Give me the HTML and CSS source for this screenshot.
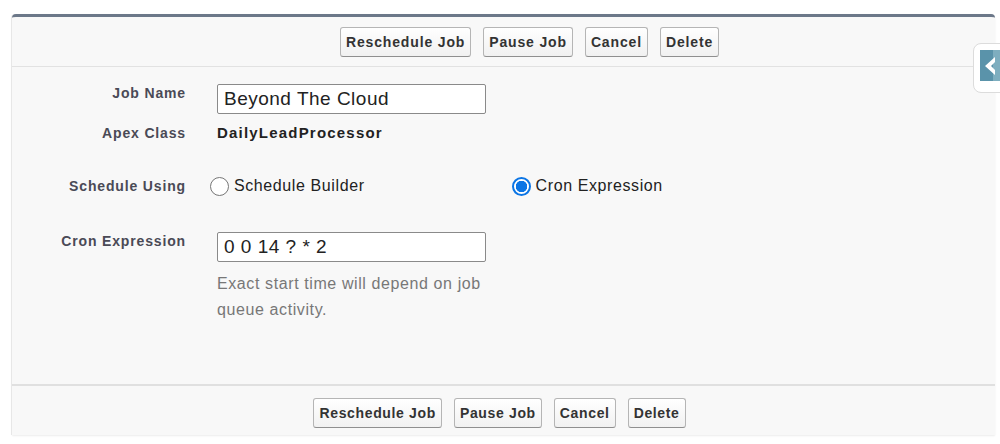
FILE: index.html
```html
<!DOCTYPE html>
<html>
<head>
<meta charset="utf-8">
<link rel="stylesheet" href="styles.css">
</head>
<body>
<div class="page">
  <div class="panel">
    <div class="btnbar top">
      <button class="btn">Reschedule Job</button>
      <button class="btn">Pause Job</button>
      <button class="btn">Cancel</button>
      <button class="btn">Delete</button>
    </div>
    <div class="form">
      <div class="row row-name">
        <div class="label">Job Name</div>
        <div class="value"><div class="input">Beyond The Cloud</div></div>
      </div>
      <div class="row row-class">
        <div class="label">Apex Class</div>
        <div class="value strong">DailyLeadProcessor</div>
      </div>
      <div class="row row-sched">
        <div class="label">Schedule Using</div>
        <div class="value radios">
          <label class="radio-opt"><span class="radio"></span>Schedule Builder</label>
          <label class="radio-opt second"><span class="radio checked"></span>Cron Expression</label>
        </div>
      </div>
      <div class="row row-cron">
        <div class="label">Cron Expression</div>
        <div class="value">
          <div class="input">0 0 14 ? * 2</div>
          <div class="help">Exact start time will depend on job queue activity.</div>
        </div>
      </div>
    </div>
    <div class="btnbar bottom">
      <button class="btn">Reschedule Job</button>
      <button class="btn">Pause Job</button>
      <button class="btn">Cancel</button>
      <button class="btn">Delete</button>
    </div>
  </div>
  <div class="sidetab">
    <div class="sidetab-inner">
      <svg width="14" height="20" viewBox="0 0 14 20"><polygon points="12,1 2,10 12,19 12,14 8,10 12,6" fill="#ffffff"/></svg>
    </div>
  </div>
</div>
</body>
</html>
```
FILE: styles.css
```css
html, body {
  margin: 0;
  padding: 0;
  background: #ffffff;
  overflow: hidden;
  font-family: "Liberation Sans", Arial, sans-serif;
}
.page {
  position: relative;
  width: 1000px;
  height: 444px;
  padding: 14px 5px 0 12px;
  box-sizing: border-box;
}
.panel {
  width: 983px;
  background: #f8f8f8;
  border-top: 3px solid #6c7889;
  border-radius: 4px 4px 0 0;
  box-shadow: 0 1px 2px rgba(0,0,0,0.08), -1px 0 0 #ececec;
}
.btnbar {
  display: flex;
  justify-content: center;
  gap: 12px;
  box-sizing: border-box;
}
.btnbar.top {
  height: 50px;
  padding: 10px 0 0 52px;
  border-bottom: 1px solid #e2e2e2;
}
.btnbar.bottom {
  height: 51px;
  padding: 12px 8px 0 0;
  border-top: 2px solid #e0e0e0;
}
.btn {
  height: 30px;
  padding: 0 5px;
  font-family: "Liberation Sans", Arial, sans-serif;
  font-size: 14px;
  font-weight: bold;
  letter-spacing: 0.85px;
  color: #333333;
  background: linear-gradient(#ffffff, #f1f1f1);
  border: 1px solid #b5b5b5;
  border-bottom-color: #8f8f8f;
  border-radius: 3px;
}
.btnbar.bottom .btn {
  letter-spacing: 0.65px;
}
.form {
  height: 317px;
  box-sizing: border-box;
  padding-top: 17px;
}
.row {
  display: flex;
  align-items: flex-start;
}
.label {
  width: 174px;
  flex: none;
  text-align: right;
  font-size: 14px;
  font-weight: bold;
  letter-spacing: 0.85px;
  color: #4a4a56;
  line-height: 18px;
}
.value {
  margin-left: 31px;
  color: #222222;
}
.input {
  width: 269px;
  height: 30px;
  box-sizing: border-box;
  border: 1px solid #8a8a8a;
  border-radius: 2px;
  background: #ffffff;
  padding: 0 6px;
  font-size: 19px;
  letter-spacing: 0.5px;
  line-height: 28px;
  color: #222222;
}
.row-class {
  margin-top: 10px;
}
.strong {
  font-size: 15px;
  font-weight: bold;
  letter-spacing: 1.2px;
  line-height: 18px;
}
.row-sched {
  margin-top: 34px;
}
.row-sched .label {
  line-height: 20px;
}
.radios {
  display: flex;
  margin-left: 24px;
}
.radio-opt {
  display: flex;
  align-items: center;
  font-size: 16px;
  letter-spacing: 0.6px;
  color: #222222;
  line-height: 20px;
}
.radio-opt.second {
  margin-left: 147px;
}
.radio {
  width: 19px;
  height: 19px;
  box-sizing: border-box;
  border: 1px solid #767676;
  border-radius: 50%;
  background: #ffffff;
  margin-right: 5px;
}
.radio.checked {
  border: 2px solid #0b75e5;
  background: radial-gradient(circle, #0b75e5 0 5.5px, #ffffff 6px);
}
.row-cron {
  margin-top: 36px;
}
.help {
  width: 269px;
  margin-top: 9px;
  font-size: 16px;
  letter-spacing: 0.6px;
  line-height: 26px;
  color: #777777;
}
.sidetab {
  position: absolute;
  left: 973px;
  top: 43px;
  width: 40px;
  height: 50px;
  box-sizing: border-box;
  background: #ffffff;
  border: 1px solid #dcdcdc;
  border-radius: 8px;
  padding: 6px 0 0 6px;
}
.sidetab-inner {
  width: 30px;
  height: 31px;
  background: linear-gradient(90deg, #5a93aa 0 13px, #7eaebf 13px);
  display: flex;
  align-items: center;
  padding-left: 3px;
  box-sizing: border-box;
}
```
